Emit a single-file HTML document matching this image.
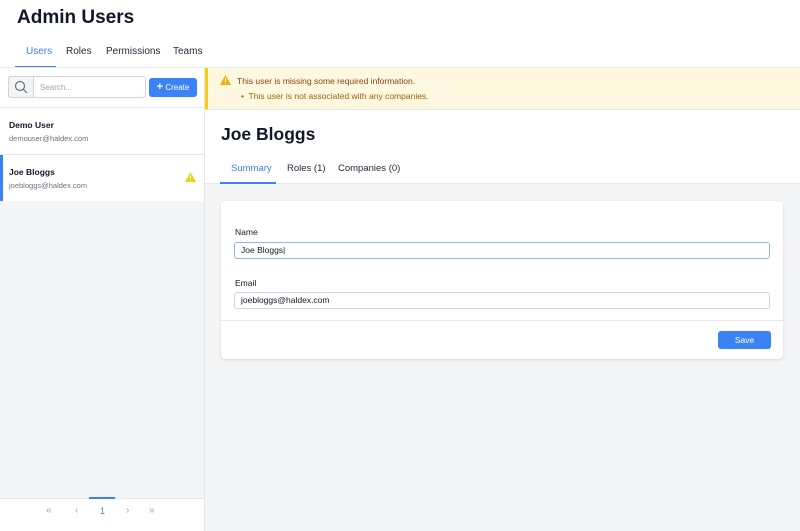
<!DOCTYPE html>
<html><head><style>
*{box-sizing:border-box;margin:0;padding:0}
body{width:800px;height:531px;position:relative;overflow:hidden;font-family:"Liberation Sans",sans-serif;background:#fff;color:#111827}
.a{position:absolute}
</style></head><body>
<div class="a" style="left:17px;top:7px;font-size:19px;font-weight:bold;color:#111827">Admin Users</div>
<div class="a" style="left:26px;top:46px;font-size:10px;color:#3b82f6">Users</div>
<div class="a" style="left:66px;top:46px;font-size:10px;color:#1f2937">Roles</div>
<div class="a" style="left:106px;top:46px;font-size:10px;color:#1f2937">Permissions</div>
<div class="a" style="left:173px;top:46px;font-size:10px;color:#1f2937">Teams</div>
<div class="a" style="left:15px;top:66px;width:41px;height:2px;background:#3b82f6"></div>
<div class="a" style="left:0;top:67px;width:800px;height:1px;background:#e5e7eb"></div>

<!-- left panel -->
<div class="a" style="left:0;top:68px;width:205px;height:463px;background:#f4f5f7;border-right:1px solid #e5e7eb"></div>
<div class="a" style="left:0;top:68px;width:204px;height:40px;background:#fff;border-bottom:1px solid #e5e7eb"></div>
<div class="a" style="left:8px;top:76px;width:138px;height:22px;border:1px solid #d1d5db;border-radius:3px;background:#fff"></div>
<div class="a" style="left:8px;top:76px;width:26px;height:22px;border:1px solid #d1d5db;border-radius:3px 0 0 3px;background:#f3f4f6"></div>
<svg class="a" style="left:14px;top:80px" width="14" height="14" viewBox="0 0 14 14"><circle cx="6" cy="6" r="4.5" fill="none" stroke="#6b7280" stroke-width="1.2"/><line x1="9.3" y1="9.3" x2="13" y2="13" stroke="#6b7280" stroke-width="1.2"/></svg>
<div class="a" style="left:40px;top:83px;font-size:8px;color:#9ca3af">Search...</div>
<div class="a" style="left:149px;top:78px;width:48px;height:19px;background:#3b82f6;border-radius:3px;color:#fff;font-size:8px;line-height:19px;text-align:center"><b style="font-size:11px">+</b> Create</div>
<div class="a" style="left:0;top:108px;width:204px;height:47px;background:#fff;border-bottom:1px solid #e5e7eb"></div>
<div class="a" style="left:9px;top:120px;font-size:8.5px;font-weight:bold">Demo User</div>
<div class="a" style="left:9px;top:134px;font-size:7.5px;color:#6b7280">demouser@haldex.com</div>
<div class="a" style="left:0;top:155px;width:204px;height:46px;background:#fff"></div>
<div class="a" style="left:0;top:155px;width:3px;height:46px;background:#3b82f6"></div>
<div class="a" style="left:9px;top:167px;font-size:8.5px;font-weight:bold">Joe Bloggs</div>
<div class="a" style="left:9px;top:181px;font-size:7.5px;color:#6b7280">joebloggs@haldex.com</div>
<svg class="a" style="left:185px;top:172px" width="11" height="10" viewBox="0 0 11 10"><path d="M5.5 0L11 10H0Z" fill="#facc15"/><rect x="5" y="3" width="1" height="4" fill="#fff"/><rect x="5" y="8" width="1" height="1" fill="#fff"/></svg>
<div class="a" style="left:0;top:498px;width:204px;height:33px;background:#fff;border-top:1px solid #e5e7eb"></div>
<div class="a" style="left:89px;top:497px;width:26px;height:2px;background:#3b82f6"></div>
<div class="a" style="left:46px;top:505px;font-size:10px;color:#9ca3af">«</div>
<div class="a" style="left:75px;top:505px;font-size:10px;color:#9ca3af">‹</div>
<div class="a" style="left:100px;top:506px;font-size:9px;color:#3b82f6">1</div>
<div class="a" style="left:126px;top:505px;font-size:10px;color:#9ca3af">›</div>
<div class="a" style="left:149px;top:505px;font-size:10px;color:#9ca3af">»</div>

<!-- right -->
<div class="a" style="left:205px;top:68px;width:595px;height:463px;background:#f4f5f7"></div>
<div class="a" style="left:205px;top:68px;width:595px;height:42px;background:#fdf9e0;border-left:3px solid #facc15;border-bottom:1px solid #e5e7eb"></div>
<svg class="a" style="left:220px;top:75px" width="11" height="10" viewBox="0 0 11 10"><path d="M5.5 0L11 10H0Z" fill="#eab308"/><rect x="5" y="3" width="1" height="4" fill="#fff"/><rect x="5" y="8" width="1" height="1" fill="#fff"/></svg>
<div class="a" style="left:237px;top:76px;font-size:8.5px;color:#92400e">This user is missing some required information.</div>
<div class="a" style="left:241px;top:91px;font-size:8.5px;color:#a16207">•&nbsp; This user is not associated with any companies.</div>
<div class="a" style="left:205px;top:110px;width:595px;height:74px;background:#fff;border-bottom:1px solid #e5e7eb"></div>
<div class="a" style="left:221px;top:124px;font-size:17.5px;font-weight:bold">Joe Bloggs</div>
<div class="a" style="left:231px;top:163px;font-size:9.5px;color:#3b82f6">Summary</div>
<div class="a" style="left:287px;top:163px;font-size:9.5px;color:#1f2937">Roles (1)</div>
<div class="a" style="left:338px;top:163px;font-size:9.5px;color:#1f2937">Companies (0)</div>
<div class="a" style="left:220px;top:182px;width:56px;height:2px;background:#3b82f6"></div>

<div class="a" style="left:221px;top:201px;width:562px;height:158px;background:#fff;border-radius:4px;box-shadow:0 1px 3px rgba(0,0,0,.12)"></div>
<div class="a" style="left:235px;top:227px;font-size:8.5px;color:#111827">Name</div>
<div class="a" style="left:234px;top:242px;width:536px;height:17px;border:1px solid #93b4f0;border-radius:3px;font-size:8.5px;line-height:15px;padding-left:6px">Joe Bloggs|</div>
<div class="a" style="left:235px;top:278px;font-size:8.5px">Email</div>
<div class="a" style="left:234px;top:292px;width:536px;height:17px;border:1px solid #d1d5db;border-radius:3px;font-size:8.5px;line-height:15px;padding-left:6px">joebloggs@haldex.com</div>
<div class="a" style="left:221px;top:320px;width:562px;height:1px;background:#e5e7eb"></div>
<div class="a" style="left:718px;top:331px;width:53px;height:18px;background:#3b82f6;border-radius:3px;color:#fff;font-size:8.5px;line-height:18px;text-align:center">Save</div>
</body></html>
